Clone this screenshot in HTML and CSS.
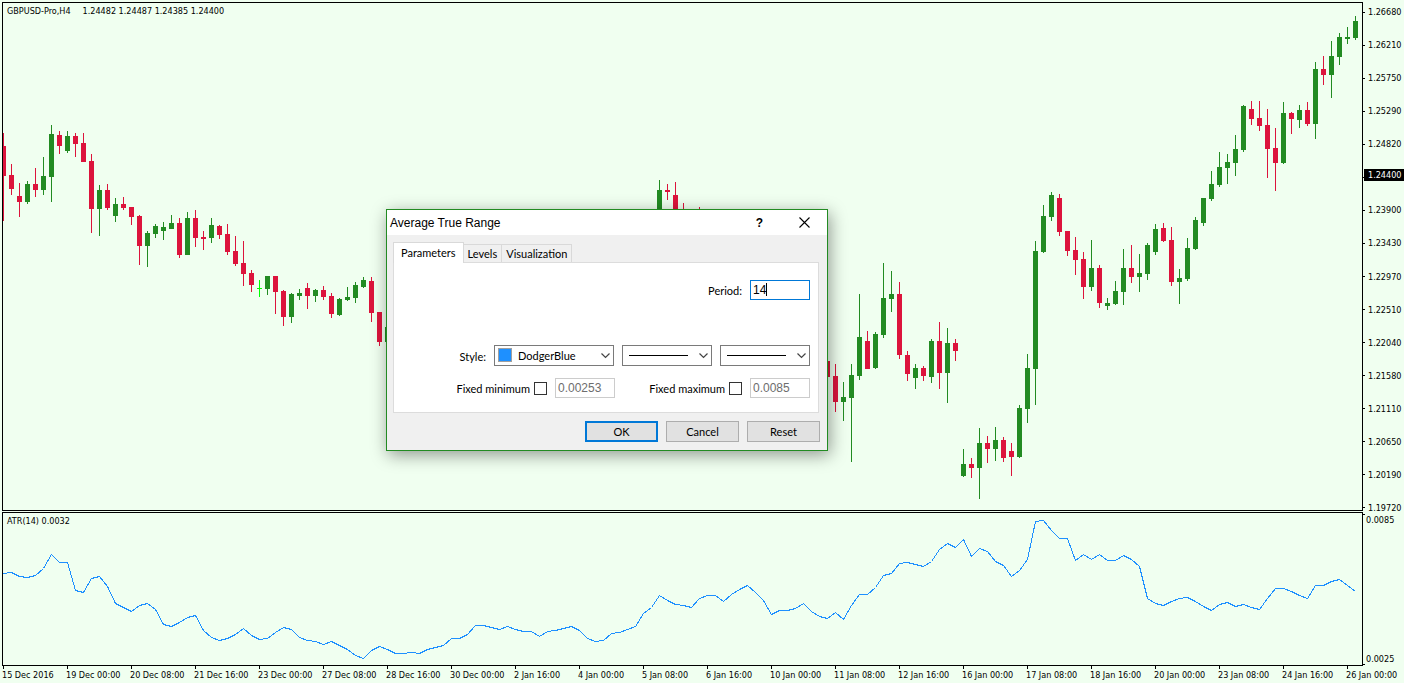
FILE: index.html
```html
<!DOCTYPE html>
<html lang="en">
<head>
<meta charset="utf-8">
<title>GBPUSD-Pro,H4</title>
<link rel="stylesheet" href="styles.css">
</head>
<body>
<main class="workspace">
  <section class="pane">
    <h1 class="pane-title"><span>GBPUSD-Pro,H4</span><span>1.24482 1.24487 1.24385 1.24400</span></h1>
    <svg class="plot" id="candles" viewBox="3 3 1359 507" preserveAspectRatio="none" role="img" aria-label="GBPUSD price"></svg>
  </section>
  <div class="axis price-axis">
    <ul class="scale">
      <li>1.26680</li><li>1.26210</li><li>1.25750</li><li>1.25290</li><li>1.24820</li><li>1.24360</li><li>1.23900</li><li>1.23430</li><li>1.22970</li><li>1.22510</li><li>1.22040</li><li>1.21580</li><li>1.21110</li><li>1.20650</li><li>1.20190</li><li>1.19720</li>
    </ul>
    <span class="last-price">1.24400</span>
  </div>
  <section class="pane">
    <h2 class="pane-title">ATR(14) 0.0032</h2>
    <svg class="plot" id="atr" viewBox="3 513 1359 152" preserveAspectRatio="none" role="img" aria-label="Average True Range"></svg>
  </section>
  <div class="axis atr-axis"><span>0.0085</span><span>0.0025</span></div>
  <ol class="time-axis">
    <li>15 Dec 2016</li><li>19 Dec 00:00</li><li>20 Dec 08:00</li><li>21 Dec 16:00</li><li>23 Dec 00:00</li><li>27 Dec 08:00</li><li>28 Dec 16:00</li><li>30 Dec 00:00</li><li>2 Jan 16:00</li><li>4 Jan 00:00</li><li>5 Jan 08:00</li><li>6 Jan 16:00</li><li>10 Jan 00:00</li><li>11 Jan 08:00</li><li>12 Jan 16:00</li><li>16 Jan 00:00</li><li>17 Jan 08:00</li><li>18 Jan 16:00</li><li>20 Jan 00:00</li><li>23 Jan 08:00</li><li>24 Jan 16:00</li><li>26 Jan 00:00</li>
  </ol>
</main>

<form class="dialog" role="dialog" aria-labelledby="dialog-title">
  <header class="titlebar">
    <h2 class="dialog-title" id="dialog-title">Average True Range</h2>
    <button type="button" class="caption-button">?</button>
    <button type="button" class="caption-button" aria-label="Close">
      <svg width="11" height="11" viewBox="0 0 11 11"><path d="M.5.5l10 10M10.500.5l-10 10" stroke="#000" stroke-width="1.100" fill="none"/></svg>
    </button>
  </header>
  <div class="dialog-body">
    <div class="tabs" role="tablist">
      <button type="button" role="tab" class="tab tab-active" aria-selected="true">Parameters</button>
      <button type="button" role="tab" class="tab">Levels</button>
      <button type="button" role="tab" class="tab">Visualization</button>
    </div>
    <div class="panel" role="tabpanel">
      <div class="row period-row">
        <label for="period">Period:</label>
        <span class="field"><input class="text-box text-box-active" id="period" type="text" value="14"><i class="caret"></i></span>
      </div>
      <div class="row style-row">
        <label for="color">Style:</label>
        <span class="combo combo-color">
          <select id="color"><option>DodgerBlue</option></select>
          <i class="swatch"></i>
          <svg class="chevron" width="9" height="6" viewBox="0 0 9 6"><path d="M.5.5l4 4 4-4"/></svg>
        </span>
        <span class="combo">
          <select aria-label="Line style"><option></option></select>
          <i class="stroke"></i>
          <svg class="chevron" width="9" height="6" viewBox="0 0 9 6"><path d="M.5.5l4 4 4-4"/></svg>
        </span>
        <span class="combo">
          <select aria-label="Line width"><option></option></select>
          <i class="stroke"></i>
          <svg class="chevron" width="9" height="6" viewBox="0 0 9 6"><path d="M.5.5l4 4 4-4"/></svg>
        </span>
      </div>
      <div class="row">
        <div class="limit">
          <label for="fix-min">Fixed minimum</label>
          <input class="check" type="checkbox" id="fix-min">
          <input class="text-box" type="text" value="0.00253" aria-label="Minimum value" disabled>
        </div>
        <div class="limit">
          <label for="fix-max">Fixed maximum</label>
          <input class="check" type="checkbox" id="fix-max">
          <input class="text-box" type="text" value="0.0085" aria-label="Maximum value" disabled>
        </div>
      </div>
    </div>
    <footer class="actions">
      <button type="button" class="button button-default">OK</button>
      <button type="button" class="button">Cancel</button>
      <button type="button" class="button">Reset</button>
    </footer>
  </div>
</form>
<script src="chart.js"></script>
</body>
</html>
```
FILE: styles.css
```css
* { box-sizing: border-box; }
body {
  margin: 0;
  background: #f0fff0;
  color: #000;
  font-family: "DejaVu Sans Condensed", "DejaVu Sans", sans-serif;
  font-size: 9px;
  line-height: 12px;
}
h1, h2, ul, ol { margin: 0; padding: 0; font-size: inherit; font-weight: normal; list-style: none; }

.workspace {
  display: grid;
  grid-template-columns: minmax(0, 1fr) 41px;
  grid-template-rows: minmax(0, 509fr) minmax(0, 155fr) 17px;
  height: 100vh;
  padding: 2px 0 0 2px;
  overflow: hidden;
}
.pane { position: relative; border: 1px solid #000; min-width: 0; }
.pane + .axis + .pane { margin-top: 1px; }
.pane-title { position: absolute; top: 2px; left: 4px; display: flex; gap: 12px; white-space: nowrap; }
.plot { display: block; width: 100%; height: 100%; shape-rendering: crispEdges; }
.up { fill: #228b22; }
.down { fill: #dc143c; }
.flat { fill: #00ff00; }
.atr-line { fill: none; stroke: #1e90ff; stroke-width: 1; vector-effect: non-scaling-stroke; }

.axis { position: relative; }
.scale { display: flex; flex-direction: column; justify-content: space-between; padding-top: 4px; }
.price-axis .scale { height: calc(100% + 3px); }
.scale li { display: flex; align-items: center; gap: 3px; }
.scale li::before { content: ""; width: 2px; height: 1px; background: #000; }
.last-price {
  position: absolute; top: 33%; left: 1px; right: 0;
  margin-top: -1px; padding-left: 4px;
  background: #000; color: #fff; line-height: 12px;
}
.atr-axis { display: flex; flex-direction: column; justify-content: space-between; padding: 3px 0 1px 3px; }
.atr-axis::before, .atr-axis::after { content: ""; position: absolute; left: 0; width: 2px; height: 1px; background: #000; }
.atr-axis::before { top: 3px; }
.atr-axis::after { bottom: 1px; }

.time-axis {
  grid-column: 1 / -1;
  display: grid;
  grid-template-columns: repeat(21, minmax(0, 64fr)) minmax(0, 58fr);
}
.time-axis li { white-space: nowrap; }
.time-axis li::before { content: ""; display: block; width: 1px; height: 3px; margin-left: 1px; background: #000; }

.dialog {
  position: absolute; top: 209px; left: 386px;
  width: 442px;
  border: 1px solid #228b22;
  background: #f0f0f0;
  box-shadow: 2px 4px 16px rgba(0, 0, 0, 0.4);
  font-family: Lato, "Liberation Sans", sans-serif;
  font-size: 11px;
  line-height: 14px;
}
.dialog button, .dialog input, .dialog select { font: inherit; color: inherit; margin: 0; padding: 0; border-radius: 0; }
.titlebar { display: flex; align-items: center; height: 25px; padding: 0 0 0 3px; background: #fff; font-family: "Liberation Sans", sans-serif; font-size: 12px; }
.dialog-title { flex: 1; }
.dialog .caption-button { display: flex; align-items: center; justify-content: center; width: 45px; height: 24px; border: 0; background: none; font-weight: bold; }

.dialog-body { padding: 7px 7px 8px 6px; }
.tabs { display: flex; align-items: flex-end; }
.dialog .tab { height: 18px; padding: 0 4px; border: 1px solid #d9d9d9; border-width: 1px 1px 0 0; background: #f0f0f0; }
.dialog .tab-active { position: relative; height: 21px; margin-bottom: -1px; padding: 0 7px 1px; border-left-width: 1px; background: #fff; }
.panel { margin-right: 1px; height: 151px; padding: 17px 8px 14px 0; border: 1px solid #dcdcdc; background: #fff; }
.row { display: flex; align-items: center; justify-content: flex-end; gap: 8px; }
.period-row { margin-bottom: 45px; }
.style-row { margin-bottom: 12px; }
.row label { padding-top: 2px; }
.field, .combo { position: relative; display: block; }
.dialog .text-box { display: block; width: 60px; height: 20px; padding: 0 2px 1px; border: 1px solid #ccc; background: #fff; color: #6d6d6d; font-family: "Liberation Sans", sans-serif; font-size: 12px; }
.dialog .text-box-active { border-color: #0078d7; color: #000; outline: none; }
.caret { position: absolute; top: 3px; left: 16px; width: 1px; height: 13px; background: #000; }
.combo { width: 90px; height: 21px; }
.combo-color { width: 120px; }
.dialog .combo select { display: block; width: 100%; height: 100%; padding-left: 23px; border: 1px solid #7a7a7a; background: #fff; appearance: none; }
.swatch { position: absolute; top: 3px; left: 4px; width: 14px; height: 14px; border: 1px solid #a0a0a0; background: #1e90ff; }
.stroke { position: absolute; top: 10px; left: 7px; width: 59px; height: 1px; background: #000; }
.chevron { position: absolute; top: 8px; right: 4px; fill: none; stroke: #444; stroke-width: 1.2; pointer-events: none; }
.limit { display: flex; align-items: center; justify-content: flex-end; width: 187px; }
.dialog .check { appearance: none; width: 13px; height: 13px; margin: 0 8px 0 4px; border: 1px solid #333; background: #fff; }
.actions { display: flex; justify-content: flex-end; gap: 8px; margin-top: 8px; }
.dialog .button { width: 73px; height: 21px; border: 1px solid #adadad; background: #e1e1e1; }
.dialog .button-default { border: 2px solid #0078d7; }
```
FILE: chart.js
```js
// Each candle: x, high, body top, body bottom, low, direction.
const candles = `3 133 146 176 221 d
11 164 175 189 195 d
19 183 196 202 217 d
27 181 184 202 204 u
35 168 184 190 197 d
43 157 176 190 195 u
51 125 134 177 202 u
59 131 135 146 154 d
67 131 136 151 153 u
75 133 136 144 157 d
83 133 143 162 162 d
91 154 161 209 233 d
99 185 190 209 236 u
107 184 190 208 210 d
115 198 204 216 222 u
123 197 204 208 210 d
131 207 207 217 225 d
139 215 216 246 265 d
147 231 233 246 267 u
155 224 226 234 238 u
163 222 227 231 240 u
171 215 223 229 229 u
179 218 223 255 258 d
187 212 218 255 255 u
195 210 218 238 247 d
203 231 237 239 250 d
211 218 225 238 243 u
219 225 226 235 239 d
227 224 234 252 255 d
235 236 251 264 266 d
243 241 263 274 286 d
251 270 273 285 292 d
259 280 288 289 297 f
267 276 276 289 295 u
275 276 276 292 314 d
283 290 291 317 326 d
291 293 294 317 323 u
299 289 293 296 300 u
307 283 288 296 309 d
315 289 290 296 302 u
323 286 290 297 300 d
331 293 296 314 318 d
339 298 299 315 316 u
347 287 297 300 301 u
355 282 285 298 303 u
363 277 280 287 288 u
371 277 281 313 322 d
379 312 312 342 346 d
387 327 327 342 342 u
659 180 190 215 215 u
667 184 190 192 200 d
675 182 195 215 215 d
683 203 212 220 220 d
699 207 212 220 220 d
827 361 361 377 377 d
835 364 376 402 412 d
843 382 397 402 421 u
851 364 375 398 462 u
859 294 337 376 380 u
867 331 341 369 369 d
875 332 334 368 369 u
883 263 298 335 338 u
891 271 294 299 312 u
899 282 294 355 359 d
907 351 355 374 381 d
915 364 368 378 389 u
923 366 368 376 381 d
931 339 341 377 383 u
939 322 341 373 389 d
947 328 343 373 403 u
955 339 343 351 361 d
963 449 464 476 477 u
971 458 464 468 478 d
979 428 443 468 499 u
987 436 443 449 463 d
995 427 440 449 461 u
1003 437 440 458 462 d
1011 443 451 457 476 d
1019 405 408 457 458 u
1027 354 368 409 423 u
1035 241 251 369 405 u
1043 205 216 252 253 u
1051 192 195 217 221 u
1059 194 198 232 236 d
1067 231 231 251 256 d
1075 237 250 260 275 d
1083 252 259 287 299 d
1091 240 268 287 291 u
1099 265 268 303 308 d
1107 298 303 306 310 u
1115 281 291 304 305 u
1123 249 268 292 305 u
1131 245 268 277 283 d
1139 254 273 277 292 u
1147 243 245 274 280 u
1155 224 229 252 255 u
1163 223 228 241 242 d
1171 227 240 282 286 d
1179 269 278 282 304 u
1187 238 248 279 281 u
1195 217 220 249 250 u
1203 198 198 223 226 u
1211 171 184 199 201 u
1219 152 167 185 187 u
1227 154 162 168 184 u
1235 135 149 163 176 u
1243 105 106 150 152 u
1251 101 109 119 125 d
1259 101 118 126 131 d
1267 109 125 149 178 d
1275 128 148 163 191 d
1283 102 113 163 164 u
1291 112 113 119 134 d
1299 105 110 120 128 u
1307 102 110 124 126 d
1315 62 69 124 139 u
1323 56 69 75 85 d
1331 41 56 75 98 u
1339 33 37 57 65 u
1347 27 37 39 44 u
1355 16 21 38 40 u`;

// One ATR value per bar, eight units apart.
const atr = [573,572,576,577,575,568,554,562,562,590,592,578,576,586,603,607,611,605,603,609,624,626,622,617,615,630,637,640,638,634,628,635,639,638,632,627,629,637,640,641,644,641,645,649,655,658,650,646,649,653,653,652,653,649,647,645,638,638,634,625,625,627,629,626,629,631,631,636,631,630,628,626,630,638,641,640,633,632,629,626,613,607,595,600,604,605,607,598,595,595,601,594,589,585,592,600,614,610,610,608,603,611,616,618,612,619,605,594,594,587,575,573,563,562,564,566,561,549,543,547,539,556,548,551,561,565,576,570,559,521,520,530,538,538,560,554,559,554,560,560,555,559,566,598,603,605,601,598,597,601,606,610,604,602,606,604,607,609,598,588,588,591,595,598,585,585,581,579,585,591];

const NS = "http://www.w3.org/2000/svg";
const classes = { u: "up", d: "down", f: "flat" };

function add(svg, tag, attributes) {
  const node = document.createElementNS(NS, tag);
  for (const name in attributes) node.setAttribute(name, attributes[name]);
  svg.appendChild(node);
}

const priceChart = document.getElementById("candles");
for (const line of candles.split("\n")) {
  const parts = line.split(" ");
  const [x, high, top, bottom, low] = parts.map(Number);
  const name = classes[parts[5]];
  add(priceChart, "rect", { class: name, x: x, y: high, width: 1, height: low - high });
  add(priceChart, "rect", { class: name, x: x - 2, y: top, width: 5, height: bottom - top });
}

add(document.getElementById("atr"), "polyline", {
  class: "atr-line",
  points: atr.map((y, i) => `${3.5 + i * 8},${y + 0.5}`).join(" ")
});
```
